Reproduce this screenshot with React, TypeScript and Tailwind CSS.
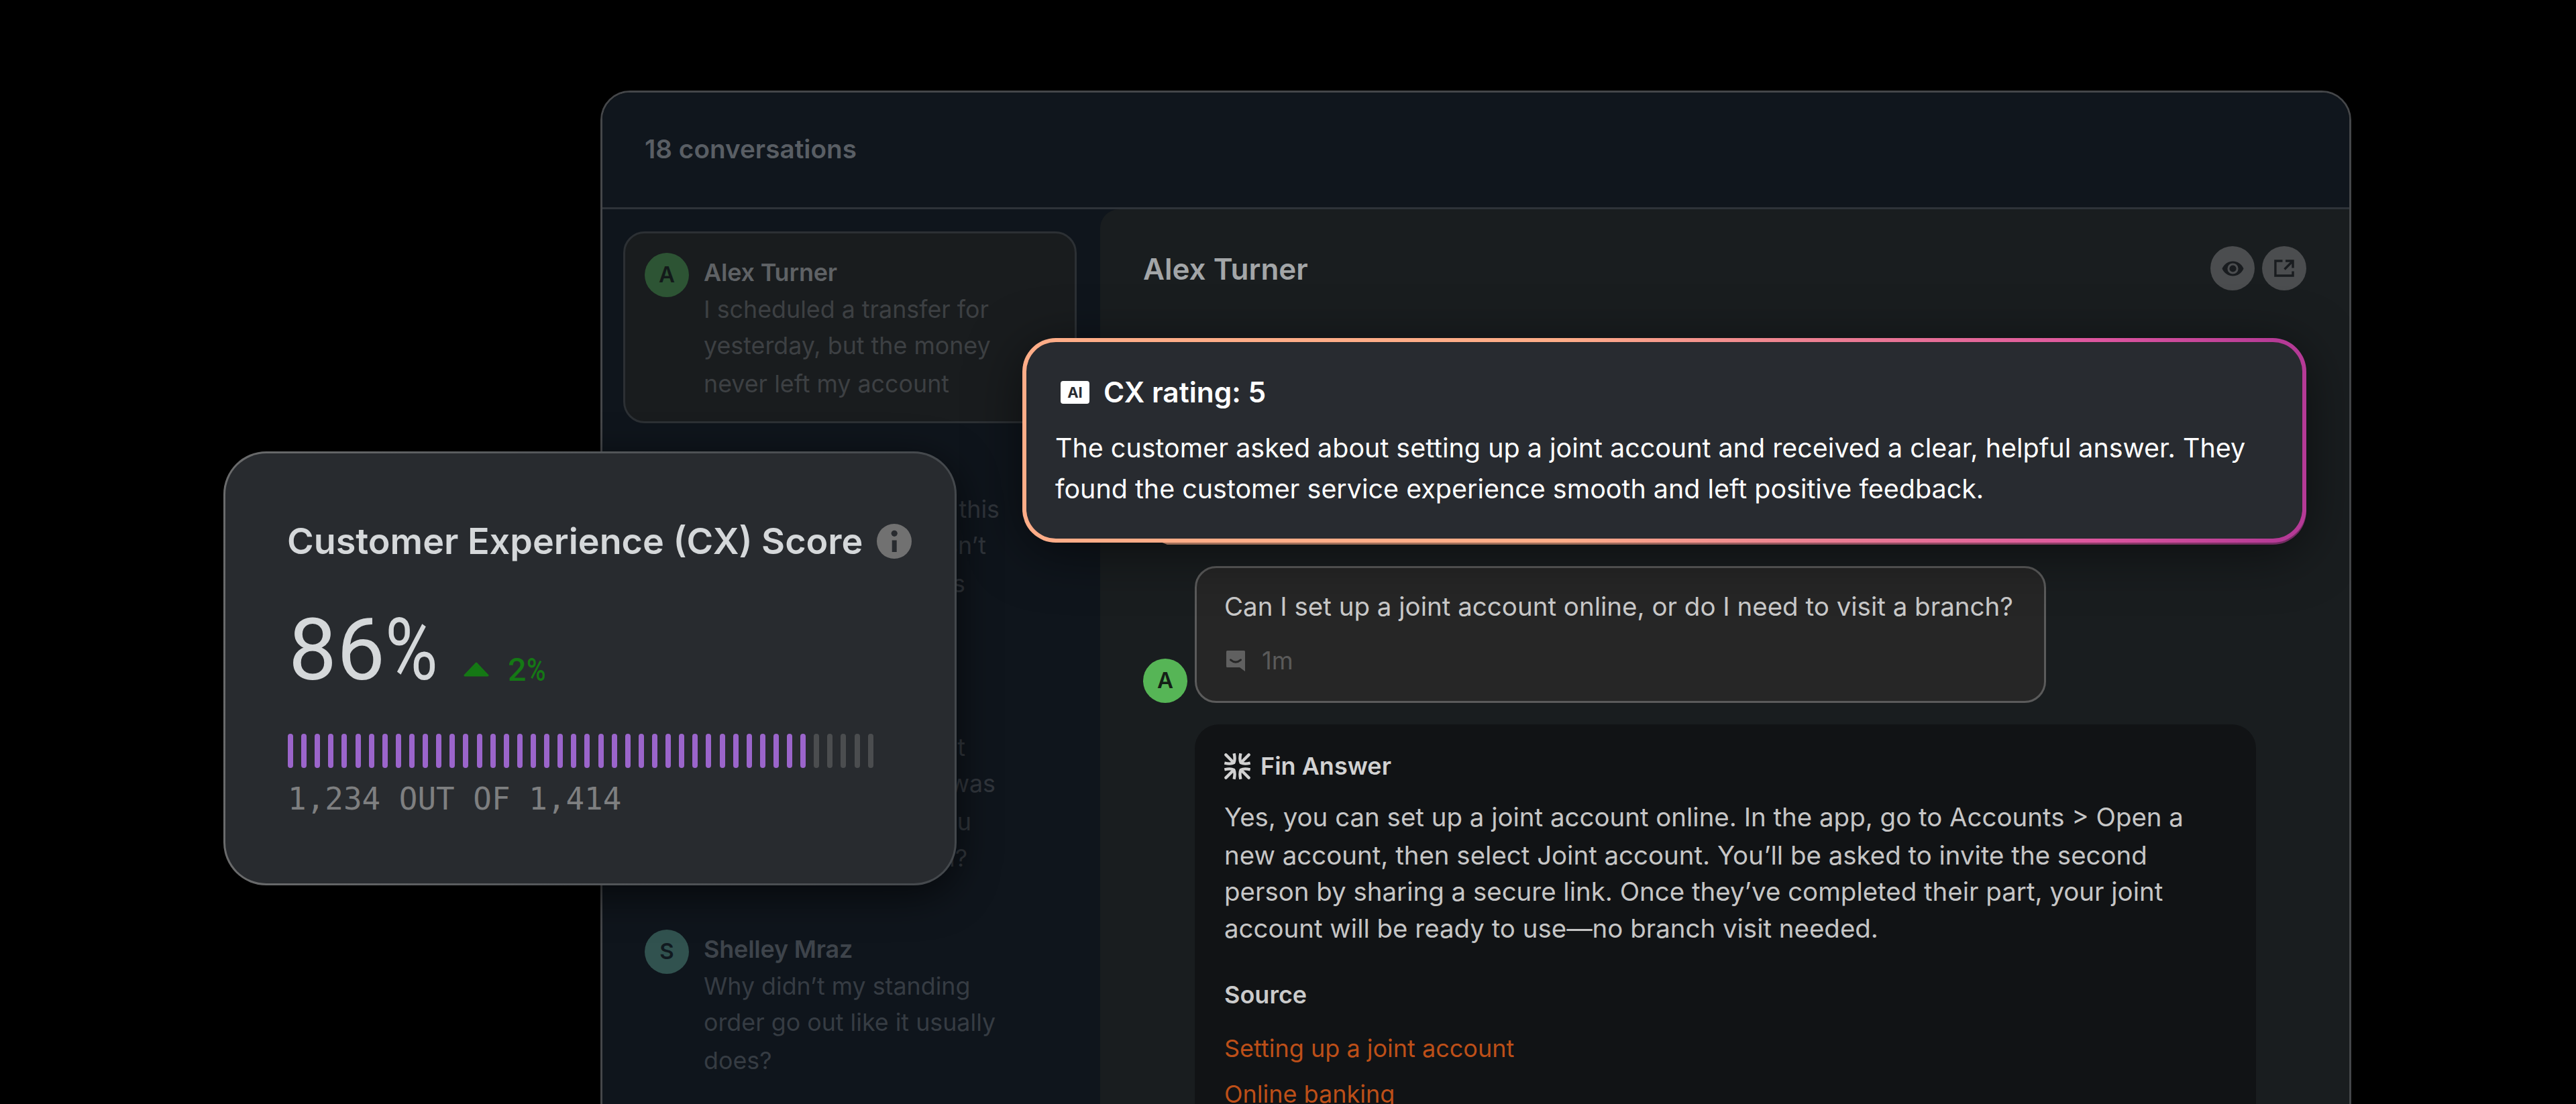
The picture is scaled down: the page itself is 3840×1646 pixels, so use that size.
import type { ReactNode } from "react";

function Avatar({ letter, className }: { letter: string; className: string }) {
  return (
    <div
      className={`flex h-[66px] w-[66px] shrink-0 items-center justify-center rounded-full text-[33px] font-semibold ${className}`}
    >
      {letter}
    </div>
  );
}

function PreviewLines({ lines, className }: { lines: ReactNode[]; className: string }) {
  const heights = ["h-[55px]", "h-[54px]", "h-[60px]", "h-[48px]"];
  return (
    <div className={`flex flex-col text-[35.8px] ${className}`}>
      {lines.map((line, i) => (
        <div key={i} className={`flex items-center whitespace-nowrap ${heights[i]}`}>
          {line}
        </div>
      ))}
    </div>
  );
}

function FinLogo() {
  const arm = "M14.6 0.3C16 6.500 16.300 10.500 14.200 14.200C10.500 16.300 6.500 16 0.3 14.600";
  return (
    <svg viewBox="0 0 39 39" className="h-[39px] w-[39px] shrink-0" fill="none" stroke="#d2d2d2" strokeWidth="4.4">
      {[0, 90, 180, 270].map((angle) => (
        <g key={angle} transform={`rotate(${angle} 19.5 19.5)`}>
          <path d={arm} strokeLinejoin="round" />
          <path d="M2.4 2.4L14 14" strokeLinecap="round" />
        </g>
      ))}
    </svg>
  );
}

function ChatIcon() {
  return (
    <svg viewBox="0 0 28 31" className="h-[31px] w-[28px] shrink-0">
      <path d="M1.5 0H26.5Q28 0 28 1.5V31L20 25H1.5Q0 25 0 23.5V1.500Q0 0 1.500 0Z" fill="#606060" />
      <path d="M6.500 13.800Q14 20.400 21.500 13.800" fill="none" stroke="#262626" strokeWidth="3" strokeLinecap="round" />
    </svg>
  );
}

function EyeIcon() {
  return (
    <svg viewBox="0 0 33 23" className="h-[23px] w-[33px]">
      <path d="M0.500 11.500C4 4 10 0.500 16.500 0.500S29 4 32.500 11.500C29 19 23 22.500 16.500 22.500S4 19 0.500 11.500Z" fill="#191c1f" />
      <circle cx="16.500" cy="11.500" r="6.600" fill="none" stroke="#4b4d4f" strokeWidth="3" />
    </svg>
  );
}

function OpenIcon() {
  return (
    <svg viewBox="0 0 30 26" className="h-[26px] w-[30px]" fill="none" stroke="#191c1f" strokeWidth="3.400">
      <path d="M12.500 2H1.900V24H28V17.500" />
      <path d="M17 2H28V12.500" />
      <path d="M27.500 2.500L15.500 14.500" />
    </svg>
  );
}

function InfoIcon() {
  return (
    <svg viewBox="0 0 52 52" className="h-[52px] w-[52px] shrink-0">
      <circle cx="26" cy="26" r="26" fill="#717171" />
      <circle cx="26.200" cy="14.300" r="4.600" fill="#282b2f" />
      <rect x="22.700" y="24.500" width="7" height="17.500" fill="#282b2f" />
    </svg>
  );
}

function RoundButton({ children }: { children: ReactNode }) {
  return (
    <button className="flex h-[66px] w-[66px] items-center justify-center rounded-full bg-[#4b4d4f]">{children}</button>
  );
}

function ConversationList() {
  return (
    <div className="flex w-[742px] shrink-0 flex-col bg-[#0f151c] pl-[31px] pt-[33px]">
      <div className="flex h-[286px] w-[676px] gap-[22px] rounded-[32px] border-[3px] border-[#2c3034] bg-[#191c1e] pl-[29px] pt-[29px]">
        <Avatar letter="A" className="bg-[#2d5434] text-[#131a1a]" />
        <div>
          <div className="flex h-[57px] items-center text-[36px] font-semibold tracking-[-0.2px] text-[#5f6265]">Alex Turner</div>
          <PreviewLines
            className="text-[#3d4043]"
            lines={["I scheduled a transfer for", "yesterday, but the money", "never left my account"]}
          />
        </div>
      </div>
      <div className="mt-[45px] h-[355px] pl-[120px] pt-[56px]">
        <PreviewLines
          className="text-[#31363c]"
          lines={[
            <span className="w-[441px] text-right">this</span>,
            <span className="w-[421px] text-right">isn’t</span>,
            <span className="w-[390px] text-right">was</span>,
          ]}
        />
      </div>
      <div className="h-[355px] pl-[120px] pt-[56px]">
        <PreviewLines
          className="text-[#31363c]"
          lines={[
            <span className="w-[390px] text-right">it</span>,
            <span className="w-[435px] text-right">was</span>,
            <span className="w-[399px] text-right">you</span>,
            <span className="w-[393px] text-right">in?</span>,
          ]}
        />
      </div>
      <div className="flex gap-[22px] pl-[32px]">
        <Avatar letter="S" className="bg-[#31524f] text-[#111a20]" />
        <div>
          <div className="flex h-[57px] items-center text-[36px] font-semibold tracking-[-0.2px] text-[#3e444b]">Shelley Mraz</div>
          <PreviewLines
            className="text-[#363c43]"
            lines={["Why didn’t my standing", "order go out like it usually", "does?"]}
          />
        </div>
      </div>
    </div>
  );
}

function Thread() {
  return (
    <div className="flex-1 bg-[#0f151c]">
      <div className="h-full rounded-tl-[28px] bg-[#191d1f] pl-[64px]">
        <div className="flex h-[176px] items-center justify-between pr-[64px]">
          <h2 className="pt-[2px] text-[44px] font-semibold text-[#a3a6a8]">Alex Turner</h2>
          <div className="flex gap-[11px]">
            <RoundButton>
              <EyeIcon />
            </RoundButton>
            <RoundButton>
              <OpenIcon />
            </RoundButton>
          </div>
        </div>
        <div className="mt-[356px] flex items-end gap-[11px]">
          <Avatar letter="A" className="bg-[#56b556] text-[#142016]" />
          <div className="h-[204px] w-[1269px] rounded-[32px] border-[3px] border-[#5b5b5b] bg-[#262626] pl-[41px] pt-[32px]">
            <p className="h-[50px] whitespace-nowrap text-[38.5px] leading-[50px] text-[#c9c9c9]">
              Can I set up a joint account online, or do I need to visit a branch?
            </p>
            <div className="mt-[35px] flex h-[42px] items-center gap-[25px] pl-[3px]">
              <ChatIcon />
              <span className="text-[36.5px] leading-[40px] text-[#5a5a5a]">1m</span>
            </div>
          </div>
        </div>
        <div className="ml-[77px] mt-[32px] h-[620px] w-[1582px] rounded-t-[36px] bg-[#111315] pl-[44px] pt-[42px]">
          <div className="flex h-[40px] items-center gap-[15px]">
            <FinLogo />
            <h3 className="text-[36px] font-semibold leading-[38px] text-[#d2d2d2]">Fin Answer</h3>
          </div>
          <div className="mt-[29px] flex flex-col whitespace-nowrap text-[38.45px] text-[#c6c6c6]">
            <div className="flex h-[55px] items-center">
              Yes, you can set up a joint account online. In the app, go to Accounts &gt; Open a
            </div>
            <div className="flex h-[60px] items-center">
              new account, then select Joint account. You’ll be asked to invite the second
            </div>
            <div className="flex h-[48px] items-center">
              person by sharing a secure link. Once they’ve completed their part, your joint
            </div>
            <div className="flex h-[61px] items-center">account will be ready to use—no branch visit needed.</div>
          </div>
          <h3 className="mt-[48px] text-[36px] font-semibold leading-[40px] text-[#cbcbcb]">Source</h3>
          <div className="mt-[40px] flex flex-col gap-[28px] text-[36px] leading-[40px] text-[#bd4f18]">
            <a>Setting up a joint account</a>
            <a>Online banking</a>
          </div>
        </div>
      </div>
    </div>
  );
}

function RatingCard() {
  const stroke = "bg-[linear-gradient(90deg,#ffad88_0%,#ffad88_42%,#ee8391_60%,#dd559f_84%,#b53a96_98%)]";
  return (
    <div className="absolute left-[1524px] top-[504px] h-[305px] w-[1914px] rounded-[50px] shadow-[0_14px_80px_rgba(0,0,0,0.5)]">
      <div className="absolute bottom-[-3px] left-0 right-0 h-[160px] overflow-hidden rounded-b-[50px] opacity-60 [clip-path:polygon(208px_0,100%_0,100%_100%,216px_100%,208px_98%)]">
        <div className={`h-full w-full ${stroke}`} />
      </div>
      <div className={`relative h-full w-full rounded-[50px] p-[6px] ${stroke}`}>
        <div className="h-full w-full rounded-[44px] bg-[#282b30] pt-[50px] text-white">
          <div className="flex h-[50px] items-center gap-[21px] pl-[51px]">
            <div className="flex h-[34px] w-[43px] items-center justify-center rounded-[4px] bg-white text-[22px] font-bold text-[#282b30]">
              AI
            </div>
            <h3 className="text-[42.4px] font-semibold leading-[50px]">CX rating: 5</h3>
          </div>
          <div className="mt-[28px] flex flex-col whitespace-nowrap pl-[43px] text-[39.45px] leading-[61px]">
            <span>The customer asked about setting up a joint account and received a clear, helpful answer. They</span>
            <span>found the customer service experience smooth and left positive feedback.</span>
          </div>
        </div>
      </div>
    </div>
  );
}

function ScoreCard() {
  return (
    <div className="absolute left-[333px] top-[673px] h-[647px] w-[1093px] rounded-[64px] bg-[linear-gradient(90deg,#6a6b6c,#54575a_45%,#44484c)] p-[3px] shadow-[0_14px_60px_rgba(0,0,0,0.6)]">
      <div className="h-full w-full rounded-[61px] bg-[#282b2f] pl-[92px] pt-[101px]">
        <div className="flex h-[60px] items-center gap-[21px]">
          <h2 className="whitespace-nowrap text-[53.9px] font-semibold text-[#d5d8da]">Customer Experience (CX) Score</h2>
          <InfoIcon />
        </div>
        <div className="ml-[2px] mt-[77px] flex h-[110px] items-start font-[Roboto,sans-serif]">
          <span className="w-[228px] whitespace-nowrap text-[128px] leading-[110px] text-[#d5d8da]">
            86<span className="inline-block origin-left scale-x-[0.84]">%</span>
          </span>
          <svg viewBox="0 0 38 22" className="ml-[33px] mt-[73px] h-[22px] w-[38px] shrink-0">
            <path d="M19 2L36 20H2Z" fill="#157815" stroke="#157815" strokeWidth="3" strokeLinejoin="round" />
          </svg>
          <span className="ml-[28px] mt-[60px] whitespace-nowrap text-[48.5px] font-medium leading-[50px] text-[#157815]">
            2<span className="inline-block origin-left scale-x-[0.8]">%</span>
          </span>
        </div>
        <div className="ml-[1px] mt-[70px] flex h-[51px] w-[873px] justify-between">
          {Array.from({ length: 44 }, (_, i) => (
            <div key={i} className={`w-[8px] rounded-[4px] ${i < 39 ? "bg-[#9b65cb]" : "bg-[#4b4d4f]"}`} />
          ))}
        </div>
        <div className="mt-[21px] whitespace-pre pl-px font-['DejaVu_Sans_Mono',monospace] text-[45.9px] leading-[50px] text-[#7e7f80]">
          1,234 OUT OF 1,414
        </div>
      </div>
    </div>
  );
}

export default function App() {
  return (
    <div className="relative h-[1646px] w-[3840px] overflow-hidden bg-black font-[Inter,sans-serif]">
      <div className="ml-[895px] flex h-[1646px] flex-col pt-[135px]">
        <div className="flex h-[1600px] w-[2610px] shrink-0 flex-col overflow-hidden rounded-t-[44px] border-[3px] border-[#444649]">
          <div className="flex h-[174px] shrink-0 items-center border-b-[3px] border-[#2e3339] bg-[#10161d] pb-[3px] pl-[63px]">
            <h1 className="text-[38.7px] font-semibold text-[#595e64]">18 conversations</h1>
          </div>
          <div className="flex flex-1">
            <ConversationList />
            <Thread />
          </div>
        </div>
      </div>
      <RatingCard />
      <ScoreCard />
    </div>
  );
}
